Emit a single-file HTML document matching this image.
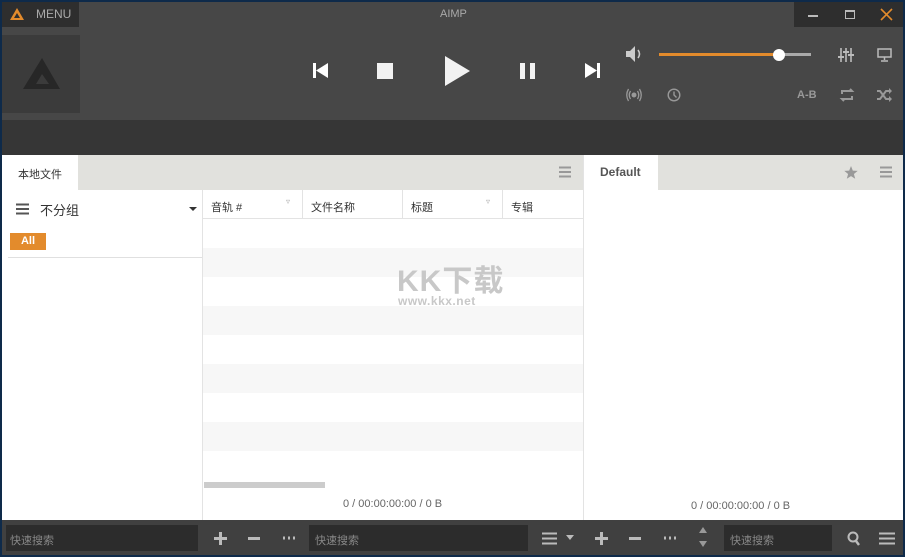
<!DOCTYPE html>
<html><head><meta charset="utf-8"><style>
*{margin:0;padding:0;box-sizing:border-box}
body{width:905px;height:557px;background:#0e2a4a;position:relative;overflow:hidden;font-family:"Liberation Sans","Noto Sans CJK SC",sans-serif}
.a{position:absolute}
.t{font-size:11px;color:#333}
</style></head><body>
<div class="a" style="left:2px;top:2px;width:901px;height:118px;background:#474747"></div>
<div class="a" style="left:2px;top:2px;width:77px;height:25px;background:#2e2e2e"></div>
<svg class="a" style="left:9px;top:7px" width="16" height="14"><path d="M8 1L15 13H1Z M8 6L5 11H11Z" fill="#e38b2c" fill-rule="evenodd"/></svg>
<div class="a" style="left:36px;top:7px;font-size:12px;color:#aaa">MENU</div>
<div class="a" style="left:440px;top:8px;font-size:11px;color:#aaa">AIMP</div>
<div class="a" style="left:794px;top:2px;width:109px;height:25px;background:#2e2e2e"></div>
<div class="a" style="left:808px;top:15px;width:10px;height:2px;background:#bbb"></div>
<div class="a" style="left:845px;top:10px;width:10px;height:9px;border:1.5px solid #bbb;border-top-width:2px"></div>
<svg class="a" style="left:880px;top:8px" width="13" height="13"><path d="M1 1L12 12M12 1L1 12" stroke="#e38b2c" stroke-width="1.6"/></svg>
<div class="a" style="left:2px;top:35px;width:78px;height:78px;background:#3b3b3b"></div>
<svg class="a" style="left:22px;top:57px" width="40" height="34"><path d="M20 1L38 32H1Z M20 17L14 27H27Z" fill="#272727" fill-rule="evenodd"/></svg>
<svg class="a" style="left:312px;top:62px" width="18" height="18"><rect x="1" y="1" width="3" height="15" fill="#fff"/><path d="M4 8.5L16 1V16Z" fill="#fff"/></svg>
<div class="a" style="left:377px;top:63px;width:16px;height:16px;background:#f2f2f2"></div>
<svg class="a" style="left:444px;top:55px" width="28" height="32"><path d="M1 1L26 16L1 31Z" fill="#f2f2f2"/></svg>
<div class="a" style="left:520px;top:63px;width:5px;height:16px;background:#f2f2f2"></div>
<div class="a" style="left:530px;top:63px;width:5px;height:16px;background:#f2f2f2"></div>
<svg class="a" style="left:584px;top:62px" width="18" height="18"><path d="M1 1L13 8.5L1 16Z" fill="#fff"/><rect x="13" y="1" width="3" height="15" fill="#fff"/></svg>
<svg class="a" style="left:625px;top:45px" width="20" height="18"><path d="M1 6H5L10 1V17L5 12H1Z" fill="#ccc"/><path d="M13 5Q16 9 13 13" stroke="#ccc" stroke-width="1.6" fill="none"/></svg>
<div class="a" style="left:659px;top:53px;width:120px;height:3px;background:#e38b2c"></div>
<div class="a" style="left:779px;top:53px;width:32px;height:3px;background:#aaa"></div>
<div class="a" style="left:773px;top:49px;width:12px;height:12px;border-radius:6px;background:#fff"></div>
<svg class="a" style="left:838px;top:47px" width="16" height="16"><g stroke="#bbb" stroke-width="1.6"><path d="M3 1V15M8 1V15M13 1V15"/></g><g fill="#bbb"><rect x="0" y="9" width="6" height="2"/><rect x="5" y="4" width="6" height="2"/><rect x="10" y="7" width="6" height="2"/></g></svg>
<svg class="a" style="left:877px;top:48px" width="15" height="14"><rect x="1" y="1" width="13" height="8" stroke="#bbb" stroke-width="1.5" fill="none"/><path d="M7.5 9V12M4 13H11" stroke="#bbb" stroke-width="1.5"/></svg>
<svg class="a" style="left:626px;top:88px" width="16" height="14"><circle cx="8" cy="7" r="2.5" fill="#999"/><path d="M4.5 3Q2 7 4.5 11M11.5 3Q14 7 11.5 11M2.5 1Q-1 7 2.5 13M13.5 1Q17 7 13.5 13" stroke="#999" stroke-width="1.3" fill="none"/></svg>
<svg class="a" style="left:667px;top:88px" width="14" height="14"><circle cx="7" cy="7" r="5.8" stroke="#999" stroke-width="1.4" fill="none"/><path d="M7 3.5V7L9.5 9.5" stroke="#999" stroke-width="1.4" fill="none"/></svg>
<div class="a" style="left:797px;top:89px;font-size:11px;font-weight:bold;color:#999">A-B</div>
<svg class="a" style="left:839px;top:88px" width="16" height="14"><path d="M3 6V3H13L11 1M13 8V11H3L5 13" stroke="#999" stroke-width="2" fill="none"/></svg>
<svg class="a" style="left:876px;top:88px" width="16" height="14"><path d="M1 3H4L10 11H14M1 11H4L10 3H14" stroke="#999" stroke-width="2" fill="none"/><path d="M13 0L16 3L13 6ZM13 8L16 11L13 14Z" fill="#999"/></svg>
<div class="a" style="left:2px;top:120px;width:901px;height:35px;background:#363636"></div>
<!-- left panel -->
<div class="a" style="left:2px;top:155px;width:581px;height:365px;background:#fff"></div>
<div class="a" style="left:2px;top:155px;width:581px;height:35px;background:#e1e1dd"></div>
<div class="a" style="left:2px;top:155px;width:76px;height:35px;background:#fff"></div>
<div class="a t" style="left:18px;top:166px">本地文件</div>
<svg class="a" style="left:559px;top:166px" width="12" height="12"><path d="M0 1.5H12M0 6H12M0 10.5H12" stroke="#999" stroke-width="2"/></svg>
<svg class="a" style="left:16px;top:203px" width="13" height="12"><path d="M0 1.5H13M0 6H13M0 10.5H13" stroke="#555" stroke-width="2"/></svg>
<div class="a" style="left:40px;top:200px;font-size:13px;color:#333">不分组</div>
<div class="a" style="left:189px;top:207px;border:4px solid transparent;border-top:4px solid #333"></div>
<div class="a" style="left:10px;top:233px;width:36px;height:17px;background:#e38b2c;color:#fff;font-size:11px;font-weight:bold;text-align:center;line-height:17px">All</div>
<div class="a" style="left:8px;top:257px;width:194px;height:1px;background:#e0e0e0"></div>
<div class="a" style="left:202px;top:190px;width:1px;height:330px;background:#e3e3e3"></div>
<div class="a" style="left:203px;top:218px;width:380px;height:1px;background:#e3e3e3"></div>
<div class="a" style="left:302px;top:190px;width:1px;height:28px;background:#e3e3e3"></div>
<div class="a" style="left:402px;top:190px;width:1px;height:28px;background:#e3e3e3"></div>
<div class="a" style="left:502px;top:190px;width:1px;height:28px;background:#e3e3e3"></div>
<div class="a t" style="left:211px;top:199px">音轨 #</div>
<div class="a t" style="left:311px;top:199px">文件名称</div>
<div class="a t" style="left:411px;top:199px">标题</div>
<div class="a t" style="left:511px;top:199px">专辑</div>
<div class="a" style="left:286px;top:197px;font-size:8px;color:#aaa">▿</div>
<div class="a" style="left:486px;top:197px;font-size:8px;color:#aaa">▿</div>
<div class="a" style="left:203px;top:248px;width:380px;height:29px;background:#f7f7f7"></div>
<div class="a" style="left:203px;top:306px;width:380px;height:29px;background:#f7f7f7"></div>
<div class="a" style="left:203px;top:364px;width:380px;height:29px;background:#f7f7f7"></div>
<div class="a" style="left:203px;top:422px;width:380px;height:29px;background:#f7f7f7"></div>
<div class="a" style="left:397px;top:256px;font-size:30px;font-weight:bold;color:#c8c8c8;letter-spacing:1px">KK下载</div>
<div class="a" style="left:398px;top:294px;font-size:12px;font-weight:bold;color:#c8c8c8;letter-spacing:0.5px">www.kkx.net</div>
<div class="a" style="left:204px;top:482px;width:121px;height:6px;background:#ccc"></div>
<div class="a" style="left:343px;top:498px;font-size:11px;color:#666">0 / 00:00:00:00 / 0 B</div>
<!-- right panel -->
<div class="a" style="left:584px;top:155px;width:319px;height:365px;background:#fff"></div>
<div class="a" style="left:583px;top:155px;width:1px;height:365px;background:#e3e3e3"></div>
<div class="a" style="left:584px;top:155px;width:319px;height:35px;background:#e1e1dd"></div>
<div class="a" style="left:584px;top:155px;width:74px;height:35px;background:#fff"></div>
<div class="a" style="left:600px;top:165px;font-size:12px;font-weight:bold;color:#555">Default</div>
<svg class="a" style="left:844px;top:166px" width="14" height="13"><path d="M7 0L8.8 4.6L13.7 4.9L9.9 8L11.2 12.8L7 10.1L2.8 12.8L4.1 8L0.3 4.9L5.2 4.6Z" fill="#999"/></svg>
<svg class="a" style="left:880px;top:166px" width="12" height="12"><path d="M0 1.5H12M0 6H12M0 10.5H12" stroke="#999" stroke-width="2"/></svg>
<div class="a" style="left:691px;top:500px;font-size:11px;color:#666">0 / 00:00:00:00 / 0 B</div>
<!-- bottom bar -->
<div class="a" style="left:2px;top:520px;width:901px;height:35px;background:#404040"></div>
<div class="a" style="left:6px;top:525px;width:192px;height:26px;background:#2c2c2c"></div>
<div class="a" style="left:309px;top:525px;width:219px;height:26px;background:#2c2c2c"></div>
<div class="a" style="left:724px;top:525px;width:108px;height:26px;background:#2c2c2c"></div>
<div class="a" style="left:10px;top:532px;font-size:11px;color:#888">快速搜索</div>
<div class="a" style="left:315px;top:532px;font-size:11px;color:#888">快速搜索</div>
<div class="a" style="left:730px;top:532px;font-size:11px;color:#888">快速搜索</div>
<svg class="a" style="left:214px;top:532px" width="13" height="13"><path d="M6.5 0V13M0 6.5H13" stroke="#bbb" stroke-width="3"/></svg>
<div class="a" style="left:248px;top:537px;width:12px;height:3px;background:#bbb"></div>
<svg class="a" style="left:282px;top:536px" width="14" height="4"><path d="M1 2h2M6 2h2M11 2h2" stroke="#bbb" stroke-width="3"/></svg>
<svg class="a" style="left:542px;top:532px" width="15" height="13"><path d="M0 1.5H15M0 6.5H15M0 11.5H15" stroke="#bbb" stroke-width="2"/></svg>
<div class="a" style="left:566px;top:535px;border:4px solid transparent;border-top:5px solid #bbb"></div>
<svg class="a" style="left:595px;top:532px" width="13" height="13"><path d="M6.5 0V13M0 6.5H13" stroke="#bbb" stroke-width="3"/></svg>
<div class="a" style="left:629px;top:537px;width:12px;height:3px;background:#bbb"></div>
<svg class="a" style="left:663px;top:536px" width="14" height="4"><path d="M1 2h2M6 2h2M11 2h2" stroke="#bbb" stroke-width="3"/></svg>
<div class="a" style="left:699px;top:527px;border:4px solid transparent;border-bottom:6px solid #999;border-top:0"></div>
<div class="a" style="left:699px;top:541px;border:4px solid transparent;border-top:6px solid #999;border-bottom:0"></div>
<svg class="a" style="left:847px;top:531px" width="14" height="15"><circle cx="6" cy="6" r="4.5" stroke="#bbb" stroke-width="2" fill="none"/><path d="M9 10L12 14" stroke="#bbb" stroke-width="2.4"/></svg>
<svg class="a" style="left:879px;top:532px" width="16" height="13"><path d="M0 1.5H16M0 6.5H16M0 11.5H16" stroke="#bbb" stroke-width="2"/></svg>
</body></html>
